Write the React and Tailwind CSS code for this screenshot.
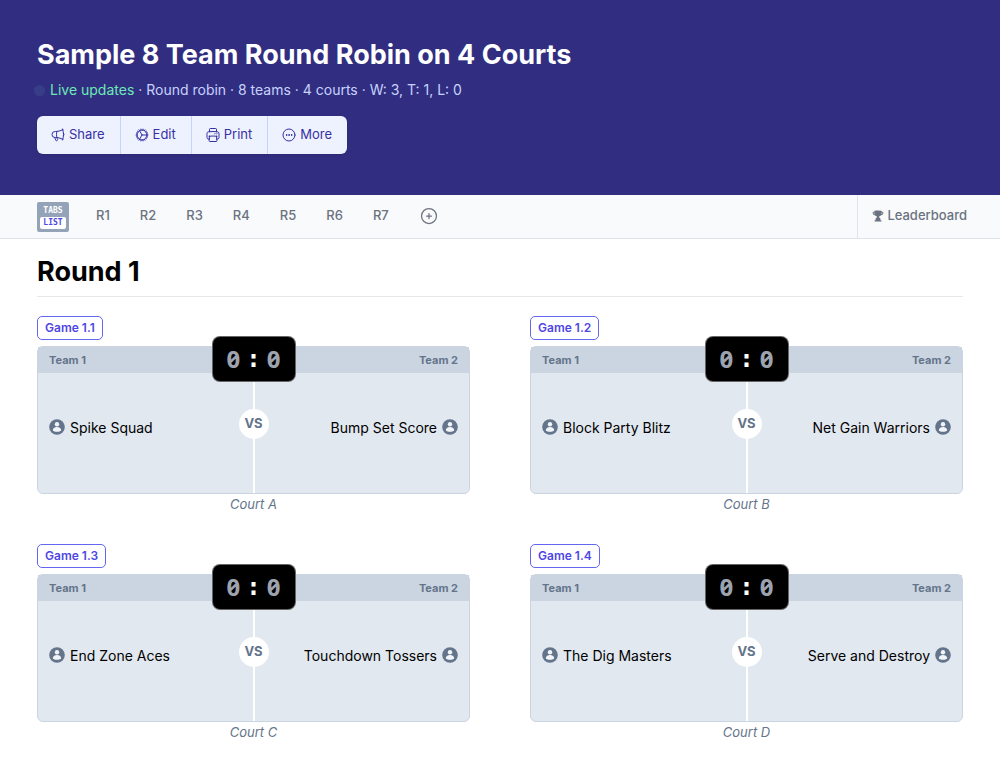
import React from 'react';
import {
  HiOutlineMegaphone,
  HiOutlineCog,
  HiOutlinePrinter,
  HiOutlineEllipsisHorizontalCircle,
  HiOutlinePlusCircle,
  HiMiniTrophy,
} from 'react-icons/hi2';

const actions = [
  { label: 'Share', icon: HiOutlineMegaphone },
  { label: 'Edit', icon: HiOutlineCog },
  { label: 'Print', icon: HiOutlinePrinter },
  { label: 'More', icon: HiOutlineEllipsisHorizontalCircle },
];

const rounds = ['R1', 'R2', 'R3', 'R4', 'R5', 'R6', 'R7'];

const games = [
  { id: '1.1', home: 'Spike Squad', away: 'Bump Set Score', court: 'Court A' },
  { id: '1.2', home: 'Block Party Blitz', away: 'Net Gain Warriors', court: 'Court B' },
  { id: '1.3', home: 'End Zone Aces', away: 'Touchdown Tossers', court: 'Court C' },
  { id: '1.4', home: 'The Dig Masters', away: 'Serve and Destroy', court: 'Court D' },
];

const PlayerIcon = () => (
  <svg viewBox="0 0 16 16" className="h-4 w-4 shrink-0" aria-hidden="true">
    <circle cx="8" cy="8" r="7.8" fill="#64748b" />
    <circle cx="8" cy="5.3" r="2.2" fill="#f1f5f9" />
    <path d="M3.8 11.2C3.8 9.3 5.5 8 8 8s4.2 1.3 4.2 3.2c0 .9-1.8 1.5-4.2 1.5s-4.2-.6-4.2-1.5z" fill="#f1f5f9" />
  </svg>
);

const Header = () => (
  <header className="bg-[#312e81] px-[37px] pt-[37px] pb-[41px]">
    <h1 className="text-[27px] leading-9 font-bold text-white">Sample 8 Team Round Robin on 4 Courts</h1>
    <p className="-ml-[3px] mt-[6px] flex items-center text-[14px] leading-[22px] text-[#c7d2fe]">
      <span className="mr-[5px] h-[11px] w-[11px] rounded-full bg-[#383d88]" />
      <span className="text-[#6ee7b7]">Live updates</span>
      <span className="whitespace-pre"> · Round robin · 8 teams · 4 courts · W: 3, T: 1, L: 0</span>
    </p>
    <div className="mt-[15px] inline-flex divide-x divide-[#c7d2fe] overflow-hidden rounded-md bg-[#eef2ff] align-top shadow-sm">
      {actions.map(({ label, icon: Icon }) => (
        <button
          key={label}
          type="button"
          className="flex h-[38px] items-center gap-[3px] pr-[15px] pl-[13px] text-[13px] text-[#3730a3] hover:bg-white"
        >
          <Icon className="h-4 w-4" />
          {label}
        </button>
      ))}
    </div>
  </header>
);

const RoundNav = () => (
  <nav className="flex h-11 items-stretch border-b border-[#dfe3e9] bg-[#f8fafc] pr-[33px] pl-[37px] text-[13px] font-medium text-[#6b7280]">
    <button
      type="button"
      className="flex h-[30px] w-8 flex-col self-center rounded-xs bg-[#94a3b8] px-[3px] py-[3px] text-center font-['DejaVu_Sans_Mono',monospace] text-[8px] leading-3 font-bold text-white"
    >
      <span className="block w-full">TABS</span>
      <span className="block w-full rounded-xs bg-white text-[#4f46e5]">LIST</span>
    </button>
    <div className="ml-[27px] flex items-center gap-[30px] pb-px">
      {rounds.map((r) => (
        <a key={r} href={`#${r}`}>{r}</a>
      ))}
      <button type="button" aria-label="Add round">
        <HiOutlinePlusCircle className="h-5 w-5" />
      </button>
    </div>
    <a href="#leaderboard" className="ml-auto flex items-center gap-[3px] border-l border-[#dfe3ee] pb-px pl-[14px]">
      <HiMiniTrophy className="h-3 w-3" />
      Leaderboard
    </a>
  </nav>
);

const GameCard = ({ game }) => (
  <article>
    <a
      href={`#game-${game.id}`}
      className="inline-flex h-6 items-center rounded-[5px] border border-[#6366f1] px-[7px] align-top text-xs font-semibold text-[#4f46e5]"
    >
      Game {game.id}
    </a>
    <div className="relative mt-[6px] rounded-md border border-[#cbd5e1] bg-[#e2e8f0]">
      <div className="flex h-[26px] items-center justify-between bg-[#cbd5e1] px-[11px] text-[11px] font-bold text-[#64748b]">
        <span>Team 1</span>
        <span>Team 2</span>
      </div>
      <div className="flex h-[120px] items-center justify-between px-[11px] pb-3 text-[14px] text-black">
        <div className="flex items-center gap-[5px]">
          <PlayerIcon />
          {game.home}
        </div>
        <div className="flex items-center gap-[5px]">
          {game.away}
          <PlayerIcon />
        </div>
      </div>

      {/* Net line, scoreboard and VS badge sit over the middle of the court */}
      <div className="absolute top-[26px] bottom-0 left-1/2 w-[2px] -translate-x-1/2 bg-white" />
      <div className="absolute -top-[11px] left-1/2 flex h-[46px] w-[84px] -translate-x-1/2 items-center justify-center gap-[6px] rounded-lg border border-white/40 bg-black text-2xl font-bold text-[#9ca3af]">
        <span className="font-['Noto_Sans',sans-serif] slashed-zero">0</span>
        <span className="font-['DejaVu_Sans_Mono',monospace] text-white">:</span>
        <span className="font-['Noto_Sans',sans-serif] slashed-zero">0</span>
      </div>
      <div className="absolute top-[62px] left-1/2 flex h-[30px] w-[30px] -translate-x-1/2 items-center justify-center rounded-full bg-white text-[13px] font-bold text-[#64748b]">
        VS
      </div>
    </div>
    <p className="text-center text-[13px] leading-5 text-[#64748b] italic">{game.court}</p>
  </article>
);

const App = () => (
  <div className="min-h-screen bg-white font-['Inter',sans-serif]">
    <Header />
    <RoundNav />
    <main className="px-[37px] pt-[15px]">
      <h2 className="border-b border-[#e5e7eb] pb-[6px] text-[27px] leading-9 font-bold text-black">Round 1</h2>
      <div className="mt-[19px] grid grid-cols-2 gap-x-[60px] gap-y-[30px]">
        {games.map((g) => (
          <GameCard key={g.id} game={g} />
        ))}
      </div>
    </main>
  </div>
);

export default App;
